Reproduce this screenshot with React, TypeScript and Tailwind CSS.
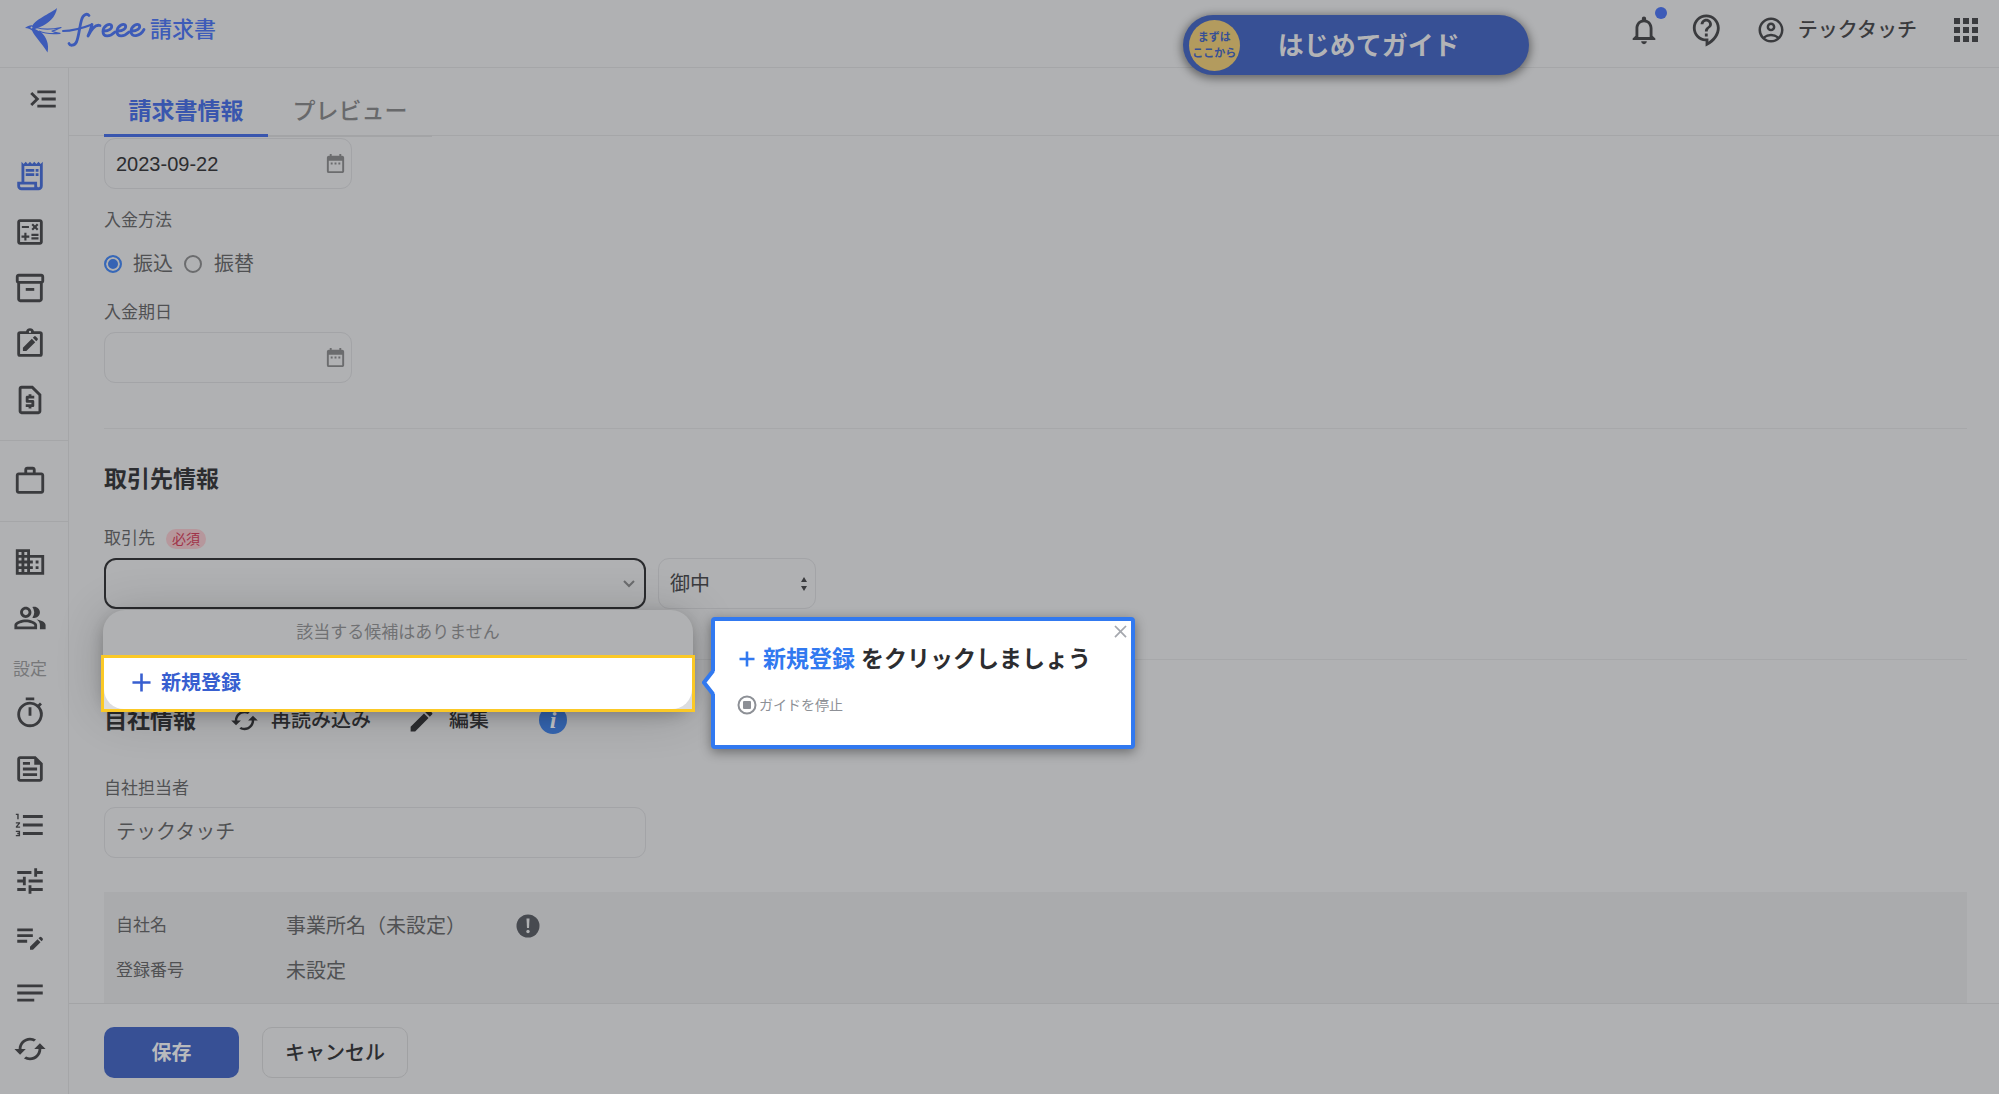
import React from "react";
import {
  MdAdd,
  MdApps,
  MdBusiness,
  MdCached,
  MdClose,
  MdDateRange,
  MdEdit,
  MdEditNote,
  MdFormatListNumbered,
  MdMenuOpen,
  MdNotes,
  MdNotificationsNone,
  MdOutlineAccountCircle,
  MdOutlineCalculate,
  MdOutlineContactSupport,
  MdOutlineFeed,
  MdOutlineInventory2,
  MdOutlinePeopleAlt,
  MdOutlineReceiptLong,
  MdOutlineRequestPage,
  MdOutlineTimer,
  MdTune,
  MdWorkOutline,
} from "react-icons/md";

const ClipboardEdit = ({ size = 34 }: { size?: number }) => (
  <svg width={size} height={size} viewBox="0 0 24 24" fill="currentColor">
    <path
      fillRule="evenodd"
      d="M5 3h4.2a2.9 2.9 0 0 1 5.6 0H19a2 2 0 0 1 2 2v14a2 2 0 0 1-2 2H5a2 2 0 0 1-2-2V5a2 2 0 0 1 2-2zm0 2v14h14V5zm7-2.3a.8.8 0 1 0 0 1.6.8.8 0 0 0 0-1.6z"
    />
    <path d="M7 17v-2.4l6.3-6.3 2.4 2.4L9.4 17zM14 7.6l.9-.9a.8.8 0 0 1 1.2 0l1.2 1.2a.8.8 0 0 1 0 1.2l-.9.9z" />
  </svg>
);

type NavIcon = React.ComponentType<{ size?: number }>;

const mainNav: { label: string; Icon: NavIcon; active?: boolean }[] = [
  { label: "請求書", Icon: MdOutlineReceiptLong, active: true },
  { label: "見積書", Icon: MdOutlineCalculate },
  { label: "納品書", Icon: MdOutlineInventory2 },
  { label: "発注書", Icon: ClipboardEdit },
  { label: "領収書", Icon: MdOutlineRequestPage },
];

const partnerNav: { label: string; Icon: NavIcon }[] = [
  { label: "事業所", Icon: MdBusiness },
  { label: "メンバー", Icon: MdOutlinePeopleAlt },
];

const settingNav: { label: string; Icon: NavIcon }[] = [
  { label: "自動化", Icon: MdOutlineTimer },
  { label: "テンプレート", Icon: MdOutlineFeed },
  { label: "採番", Icon: MdFormatListNumbered },
  { label: "詳細設定", Icon: MdTune },
  { label: "メモ", Icon: MdEditNote },
  { label: "備考", Icon: MdNotes },
  { label: "連携", Icon: MdCached },
];

const NavButton = ({ label, Icon, active }: { label: string; Icon: NavIcon; active?: boolean }) => (
  <button
    aria-label={label}
    className={`flex h-14 w-full items-center justify-center pr-2 ${active ? "text-[#3956a6]" : "text-[#3a3b3e]"}`}
  >
    <Icon size={34} />
  </button>
);

const Logo = () => (
  <a href="#" className="flex items-center text-[#3d5bb8]" aria-label="freee 請求書">
    <svg width="120" height="48" viewBox="0 0 120 48" fill="none" className="overflow-visible">
      <path
        fill="currentColor"
        d="M31 2C27 6 10 13 6.500 19.500C4 19 2 20 -1 22C2 22 4 23 6 24.500C9 31 15 36 21.500 46.500C23.500 38 20 31 15.500 26.500L9 23L14 21C22 18 30 11 31 2z"
      />
      <circle cx="5.500" cy="21.500" r="1" fill="#b0b1b3" />
      <path
        stroke="currentColor"
        strokeWidth="1.200"
        strokeLinejoin="round"
        d="M10 21.500C18 24 26 23.500 35 21.500C32 23 29 24.500 26 25C28 26.500 31 27 34 27.300C27 28 20 28 13 25"
      />
      <path
        stroke="currentColor"
        strokeWidth="2"
        strokeLinecap="round"
        d="M37 25C46 25 57 22 66 18.500"
      />
      <path
        stroke="currentColor"
        strokeWidth="2.800"
        strokeLinecap="round"
        strokeLinejoin="round"
        d="M63 9.500C61 7 57 8.500 55.500 14C53.500 21 53 30 50.500 36C48.500 40 44 40 43 37.500"
      />
      <path
        stroke="currentColor"
        strokeWidth="2.800"
        strokeLinecap="round"
        strokeLinejoin="round"
        d="M66 18.500C65 22 64 26 62 30C65 24 69 18 74 19.500M78 25C83 25 86.500 22.500 85.500 19.500C84 16.500 77 20 77 25.500C77 31.500 84 31 89 26M92 25C97 25 100.500 22.500 99.500 19.500C98 16.500 91 20 91 25.500C91 31.500 98 31 103 26M106 25C111 25 114.500 22.500 113.500 19.500C112 16.500 105 20 105 25.500C105 31.500 114 31 118 23.500"
      />
    </svg>
    <span className="ml-1 text-[22px] font-medium leading-8">請求書</span>
  </a>
);

const Header = () => (
  <header className="flex h-[68px] shrink-0 items-start justify-between border-b border-[#a5a6a8] pl-[26px] pr-[15px]">
    <div className="pt-[6px]">
      <Logo />
    </div>
    <div className="flex items-start">
      <button className="mr-[98px] mt-[15px] flex h-[60px] w-[346px] items-center rounded-full bg-[#375095] pl-[6px] shadow-[0_2px_8px_2px_rgba(0,0,0,0.4)]">
        <span className="flex size-[51px] flex-col items-center justify-center rounded-full bg-[#b39b5e] text-[11px] font-bold leading-4 text-[#375095]">
          <span>まずは</span>
          <span>ここから</span>
        </span>
        <span className="ml-[38px] pt-[2px] text-[26px] font-bold leading-9 text-[#b2b3b6]">はじめてガイド</span>
      </button>
      <div className="flex h-[60px] items-center text-[#3a3b3e]">
        <button aria-label="お知らせ" className="relative">
          <MdNotificationsNone size={34} />
          <span className="absolute -right-[6px] -top-[6px] size-3 rounded-full bg-[#3d5bb8]" />
        </button>
        <button aria-label="ヘルプ" className="ml-[29px]">
          <MdOutlineContactSupport size={34} />
        </button>
        <button className="ml-8 flex items-center gap-3 text-[20px] font-medium">
          <MdOutlineAccountCircle size={30} />
          テックタッチ
        </button>
        <button aria-label="アプリ一覧" className="ml-[31px]">
          <MdApps size={36} />
        </button>
      </div>
    </div>
  </header>
);

const Sidebar = () => (
  <nav className="flex w-[69px] shrink-0 flex-col border-r border-[#a5a6a8]">
    <button aria-label="メニューを開く" className="mb-[17px] mt-[14px] flex h-9 justify-end pr-2 text-[#3a3b3e]">
      <MdMenuOpen size={34} className="-scale-x-100" />
    </button>
    <div className="flex flex-col pb-3 pt-[13px]">
      {mainNav.map((item) => (
        <NavButton key={item.label} {...item} />
      ))}
    </div>
    <div className="border-y border-[#a5a6a8] py-3">
      <NavButton label="案件" Icon={MdWorkOutline} />
    </div>
    <div className="flex flex-col pt-3">
      {partnerNav.map((item) => (
        <NavButton key={item.label} {...item} />
      ))}
      <p className="mb-[3px] mt-3 pr-2 text-center text-[17px] leading-6 text-[#77787a]">設定</p>
      {settingNav.map((item) => (
        <NavButton key={item.label} {...item} />
      ))}
    </div>
  </nav>
);

const DateField = ({ id, label, value }: { id: string; label: string; value: string }) => (
  <div className="flex h-[51px] w-[248px] items-center rounded-[11px] border border-[#a3a4a7] pl-[11px] pr-1">
    <input
      id={id}
      aria-label={label}
      defaultValue={value}
      className="w-full min-w-0 bg-transparent font-['Liberation_Sans',sans-serif] text-[20px] leading-6 text-[#2c2d30] outline-none"
    />
    <button aria-label="カレンダーを開く" className="shrink-0 text-[#6b6c6e]">
      <MdDateRange size={23} />
    </button>
  </div>
);

const PaymentSection = () => (
  <section className="border-b border-[#a7a8aa] pb-[45px] pt-[2px]">
    <DateField id="invoice-date" label="請求日" value="2023-09-22" />
    <fieldset className="mt-5">
      <legend className="text-[17px] leading-6 text-[#505153]">入金方法</legend>
      <div className="mt-[15px] flex h-8 items-center text-[20px] text-[#505153]">
        <label className="flex items-center gap-[11px]">
          <input
            type="radio"
            name="payment"
            defaultChecked
            className="size-[18px] appearance-none rounded-full border-2 border-[#3768b8] bg-[#3563b4] shadow-[inset_0_0_0_2px_#b0b1b3]"
          />
          振込
        </label>
        <label className="ml-[11px] flex items-center gap-3">
          <input type="radio" name="payment" className="size-[18px] appearance-none rounded-full border-2 border-[#6b6c6e]" />
          振替
        </label>
      </div>
    </fieldset>
    <label htmlFor="due-date" className="mb-[7px] mt-[21px] block text-[17px] leading-6 text-[#505153]">
      入金期日
    </label>
    <DateField id="due-date" label="入金期日" value="" />
  </section>
);

const PartnerMenu = () => (
  <div className="absolute -left-px top-[52px] z-10 w-[590px] rounded-[22px] bg-[#b0b1b3] shadow-[0_4px_48px_rgba(0,0,0,0.2),0_6px_14px_rgba(0,0,0,0.2)]">
    <p className="pb-3 pt-[13px] text-center text-[17px] leading-5 text-[#707173]">該当する候補はありません</p>
    <div className="-mx-[2px] -mb-[3px] border-3 border-[#fbc926] bg-[#dcdddf]">
      <button className="flex h-[51px] w-full items-center rounded-b-[20px] bg-white pb-[2px] pl-[22px] text-[20px] font-bold text-[#385fd0]">
        <MdAdd size={31} className="mr-1" />
        新規登録
      </button>
    </div>
  </div>
);

const GuidePopup = () => (
  <div
    role="dialog"
    aria-label="ガイド"
    className="absolute left-[607px] top-[59px] z-20 h-[132px] w-[424px] rounded-[4px] border-4 border-[#3179f0] bg-white pl-[23px] pt-[22px] shadow-[0_3px_12px_rgba(0,0,0,0.4)]"
  >
    <svg width="13" height="24" viewBox="0 0 13 24" className="absolute -left-[13px] top-[50px]">
      <path d="M13 0L2 11.500L13 23z" fill="white" />
      <path d="M11 0L2 11.500L11 23" fill="none" stroke="#3179f0" strokeWidth="4" />
    </svg>
    <button aria-label="閉じる" className="absolute right-0 top-0 text-[#a5a8ae]">
      <MdClose size={21} />
    </button>
    <p className="flex items-center text-[23px] font-bold leading-8 text-[#2c2d30]">
      <span className="flex items-center gap-[7px] text-[#3179f0]">
        <svg width="18" height="18" viewBox="0 0 18 18" fill="none" stroke="currentColor" strokeWidth="2.600">
          <path d="M9 1.500v15M1.500 9h15" />
        </svg>
        新規登録
      </span>
      <span className="ml-[6px]">をクリックしましょう</span>
    </p>
    <button className="-ml-px mt-[18px] flex items-center gap-[2px] text-[14px] leading-6 text-[#8d9096]">
      <svg width="20" height="20" viewBox="0 0 20 20">
        <circle cx="10" cy="10" r="8.500" fill="none" stroke="currentColor" strokeWidth="2" />
        <rect x="6" y="6" width="8" height="8" rx="1" fill="currentColor" />
      </svg>
      ガイドを停止
    </button>
  </div>
);

const PartnerSection = () => (
  <section className="border-b border-[#a7a8aa] pb-[50px] pt-[34px]">
    <h2 className="text-[23px] font-bold leading-8 text-[#2c2d30]">取引先情報</h2>
    <div className="mt-8 flex h-6 items-center">
      <label htmlFor="partner" className="text-[17px] leading-6 text-[#505153]">
        取引先
      </label>
      <span className="ml-[11px] rounded-full bg-[#b6979c] px-[6px] text-[14px] leading-5 text-[#a03349]">必須</span>
    </div>
    <div className="relative mt-[7px] flex gap-3">
      <div className="flex h-[51px] w-[542px] items-center rounded-[12px] border-2 border-[#2a2b2e] pl-3 pr-2">
        <input
          id="partner"
          role="combobox"
          aria-expanded="true"
          aria-controls="partner-menu"
          className="w-full min-w-0 bg-transparent text-[20px] outline-none"
        />
        <svg width="14" height="10" viewBox="0 0 14 10" fill="none" stroke="#6b6c6e" strokeWidth="2" className="shrink-0">
          <path d="M2 2l5 5 5-5" />
        </svg>
      </div>
      <div className="relative h-[51px] w-[158px]">
        <select
          aria-label="敬称"
          className="h-full w-full appearance-none rounded-[11px] border border-[#a3a4a7] bg-transparent pl-[11px] text-[20px] text-[#3a3b3e]"
        >
          <option>御中</option>
          <option>様</option>
        </select>
        <svg width="8" height="16" viewBox="0 0 8 16" fill="#3a3b3e" className="pointer-events-none absolute right-2 top-[18px]">
          <path d="M4 1l3 5H1zM4 15L1 10h6z" />
        </svg>
      </div>
      <div id="partner-menu">
        <PartnerMenu />
      </div>
      <GuidePopup />
    </div>
  </section>
);

const CompanySection = () => (
  <section className="flex min-h-0 flex-1 flex-col pt-[42px]">
    <div className="flex h-9 items-center text-[#2c2d30]">
      <h2 className="text-[23px] font-bold leading-8">自社情報</h2>
      <button className="ml-[34px] flex items-center gap-3 text-[20px] font-medium leading-8">
        <MdCached size={29} />
        再読み込み
      </button>
      <button className="ml-9 flex items-center gap-[13px] text-[20px] font-medium leading-8">
        <MdEdit size={29} />
        編集
      </button>
      <button
        aria-label="情報"
        className="ml-[50px] size-7 rounded-full bg-[#3565b0] font-['Liberation_Serif',serif] text-[24px] font-bold italic leading-7 text-[#c4c6ca]"
      >
        i
      </button>
    </div>
    <label htmlFor="staff" className="mt-[39px] text-[17px] leading-6 text-[#505153]">
      自社担当者
    </label>
    <input
      id="staff"
      defaultValue="テックタッチ"
      className="mt-[6px] h-[51px] w-[542px] shrink-0 rounded-[11px] border border-[#a3a4a7] bg-transparent px-[11px] pb-1 text-[20px] text-[#505153] outline-none"
    />
    <dl className="mt-[34px] flex min-h-0 flex-1 flex-col gap-[13px] bg-[#aaabad] pl-3 pt-[18px] text-[#505153]">
      <div className="flex h-8 items-center">
        <dt className="w-[170px] text-[17px]">自社名</dt>
        <dd className="flex items-center text-[20px]">
          事業所名（未設定）
          <svg width="24" height="24" viewBox="0 0 24 24" className="ml-[50px]">
            <circle cx="12" cy="12" r="11.500" fill="#474a50" />
            <path d="M10.500 4.500h3l-.5 9.500h-2z" fill="#b0b1b3" />
            <circle cx="12" cy="17.500" r="1.700" fill="#b0b1b3" />
          </svg>
        </dd>
      </div>
      <div className="flex h-8 items-center">
        <dt className="w-[170px] text-[17px]">登録番号</dt>
        <dd className="text-[20px]">未設定</dd>
      </div>
    </dl>
  </section>
);

export default function App() {
  return (
    <div className="h-screen bg-white pb-px font-['Liberation_Sans','Noto_Sans_CJK_JP',sans-serif]">
      <div className="flex h-full flex-col overflow-hidden bg-[#b0b1b3]">
        <Header />
        <div className="flex min-h-0 flex-1">
          <Sidebar />
          <div className="flex min-w-0 flex-1 flex-col">
            <div role="tablist" className="flex h-[68px] shrink-0 items-end border-b border-[#a5a6a8] pl-[35px]">
              <button
                role="tab"
                aria-selected="true"
                className="-mb-[2px] h-[54px] w-[164px] border-b-3 border-[#3956ae] pt-[5px] text-[23px] font-bold text-[#3956ae]"
              >
                請求書情報
              </button>
              <button
                role="tab"
                aria-selected="false"
                className="-mb-[2px] h-[54px] w-[164px] border-b-2 border-[#a3a4a6] pt-[5px] text-[23px] font-medium text-[#68696b]"
              >
                プレビュー
              </button>
            </div>
            <main className="flex min-h-0 flex-1 flex-col pl-[35px] pr-8">
              <PaymentSection />
              <PartnerSection />
              <CompanySection />
            </main>
            <footer className="flex h-[91px] shrink-0 items-start gap-[23px] border-t border-[#a3a4a6] pl-[35px] pt-[23px] text-[20px] font-bold">
              <button className="h-[51px] w-[135px] rounded-[10px] bg-[#375095] text-[#b8babd]">保存</button>
              <button className="h-[51px] w-[146px] rounded-[10px] border border-[#a0a1a3] font-medium text-[#2c2d30]">キャンセル</button>
            </footer>
          </div>
        </div>
      </div>
    </div>
  );
}
